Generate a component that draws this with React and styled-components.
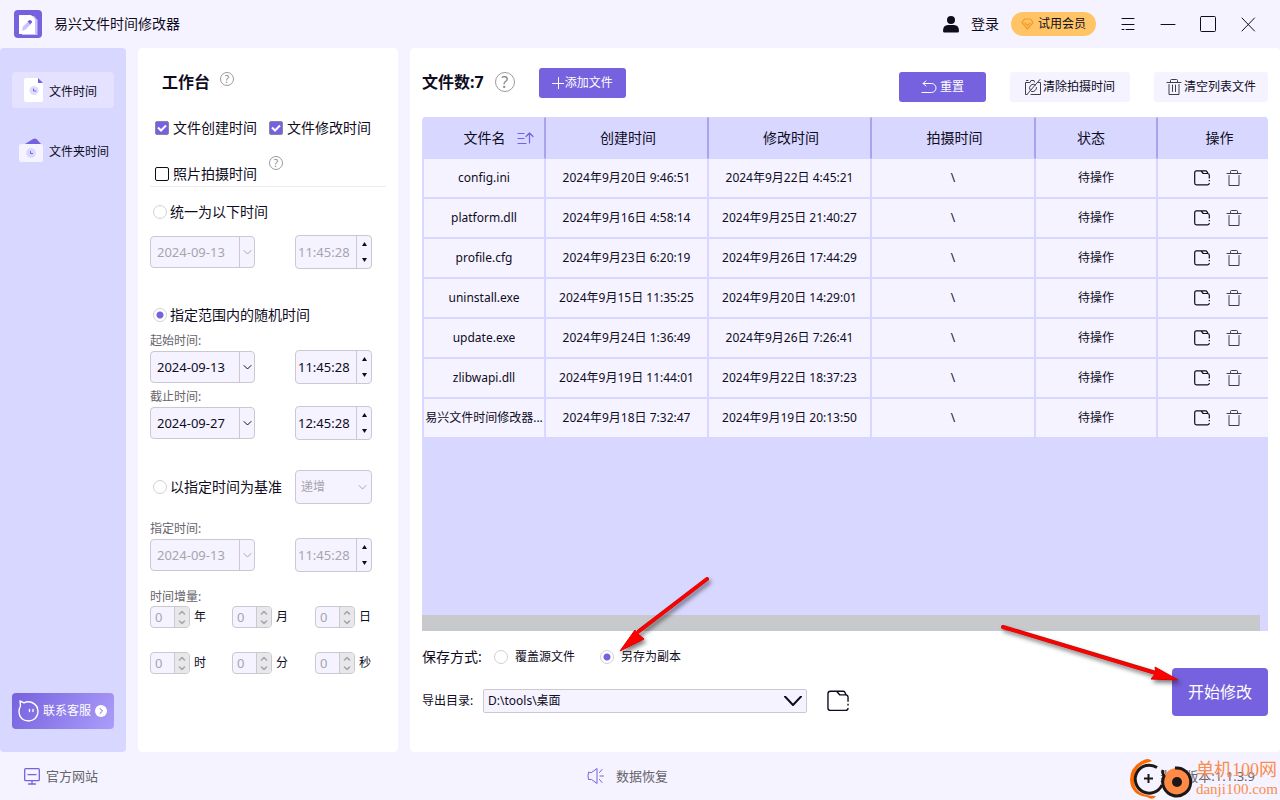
import React from "react";
import styled, { createGlobalStyle, css } from "styled-components";

const Global = createGlobalStyle`
  * { box-sizing: border-box; }
  body {
    margin: 0;
    background: #f5f3ff;
    color: #0f0c1e;
    font-family: "Noto Sans", "Noto Sans CJK SC", sans-serif;
    font-size: 12px;
    line-height: 18px;
  }
  button, input, select { font: inherit; color: inherit; margin: 0; }
  button { border: 0; background: none; padding: 0; cursor: pointer; }
  svg { display: block; flex: none; }
`;

const line = "#cbc8cf";
const purple = "#7661de";

/* ---------- icons ---------- */

const Svg = ({ w = 16, h = w, sw = 1, children, ...rest }) => (
  <svg width={w} height={h} viewBox={`0 0 ${w} ${h}`} fill="none" stroke="currentColor"
    strokeWidth={sw} strokeLinecap="round" strokeLinejoin="round" aria-hidden="true" {...rest}>
    {children}
  </svg>
);

const LogoIcon = () => (
  <Svg w={28} stroke="none">
    <rect width="28" height="28" rx="4" fill={purple} />
    <path d="M8 6h12l3.500 4v15H8z" fill="#c9c3fb" />
    <path d="M5 5.500Q5 5 5.500 5H17l4 4v14.500q0 .5-.5.500h-15Q5 24 5 23.500z" fill="#fff" />
    <path d="M8 21l1-4.500 5.500-5 2.500 2.500-5.500 5.500z" fill="#c9c3fb" />
    <path d="M13.500 11.500l2-1.600q2.600.1 2.600 2.600l-2 1.800z" fill={purple} />
  </Svg>
);
const FileClock = () => (
  <Svg w={24} stroke="none">
    <path d="M7 0h12v5h5v17q0 2-2 2H7q-2 0-2-2V2Q5 0 7 0z" fill="#fff" />
    <path d="M19 0v5h5z" fill={purple} />
    <circle cx="15" cy="12.500" r="4.500" fill="#dedcff" />
    <path d="M14.500 11v2h2.500" stroke={purple} />
  </Svg>
);
const FolderClock = () => (
  <Svg w={24} stroke="none">
    <path d="M6 6l8-5q2-1 3.500 0L22 6z" fill={purple} />
    <rect y="6" width="24" height="18" rx="2" fill="#f5f3ff" />
    <circle cx="12" cy="15" r="4.800" fill="#d8d7ff" />
    <path d="M11.500 13.500v2h2" stroke={purple} />
  </Svg>
);
const UserIcon = () => (
  <Svg w={16} h={17} stroke="none">
    <circle cx="8" cy="4" r="4" fill="#0f0c1e" />
    <path d="M0 15q0-6 5-6h6q5 0 5 6 0 1.500-1.500 1.500h-13Q0 16.500 0 15z" fill="#0f0c1e" />
  </Svg>
);
const DiamondIcon = () => (
  <Svg w={13} h={12} color="#f59a23" sw={1.2}>
    <path d="M3.500 1h6l2.500 3.500-5.500 6.500L1 4.500z" /><path d="M4 5l2.500 2.500L9 5" />
  </Svg>
);
const MenuIcon = () => (
  <Svg w={16} h={14}><path d="M2 1.500h12M2 7.500h12M2 12.500h2M6 12.500h8" /></Svg>
);
const MinIcon = () => <Svg w={16}><path d="M1 8.500h14" /></Svg>;
const MaxIcon = () => <Svg w={16}><rect x=".5" y=".5" width="15" height="15" rx="1" /></Svg>;
const CloseIcon = () => <Svg w={16}><path d="M2 2l12.500 13M14.500 2L2 15" /></Svg>;
const UndoIcon = () => (
  <Svg w={16} h={14}><path d="M5 1L2 3.500 5 6M2 3.500h8.500a4.500 4.500 0 0 1 0 9H1" /></Svg>
);
const PlusIcon = () => <Svg w={12}><path d="M0 6.500h12M6.500 0v12" /></Svg>;
const NoCamera = () => (
  <Svg w={16} h={16} color="#3f3c4b">
    <path d="M9.500 3L9 1.500H6L5 3.500H.5v12H2M6 15.500h9.500v-12h-2M1.500 1.500H3M15 .5L2 15.500" />
    <path d="M10.500 6A3.800 3.800 0 0 0 5 11M11.500 8.500A3.800 3.800 0 0 1 6.500 12.500" />
  </Svg>
);
const TrashIcon = ({ bars }) => (
  <Svg w={16} h={17} color="#3f3c4b">
    <path d="M1 3.500h14M4.500 3.500V1.500q0-1 1-1h5q1 0 1 1v2M3 5.500v10h10v-10" />
    {bars && <path d="M6.500 6v6.500M9.500 6v6.500" />}
  </Svg>
);
const FolderIcon = ({ size = 16, sw = 1.2 }) => (
  <svg width={size} height={size} viewBox="0 0 16 16" fill="none" stroke="currentColor"
    strokeWidth={sw} strokeLinejoin="round" aria-hidden="true">
    <path d="M15.300 8.500V5.300q0-1.800-1.800-1.800H9.200L7 .9H2.500Q.7.900.7 2.700v10.300q0 1.800 1.800 1.800h11q1.800 0 1.800-1.800M15.300 10v1.300M7 .9h4.800q.8 0 1.200.8l1 1.900" />
  </svg>
);
const SortIcon = () => (
  <Svg w={17} h={12} color={purple} sw={1.2}><path d="M1 1.500h6M1 6.500h6M1 11.500h8M12.500 11V1M9 4.500L12.500 1 16 4.500" /></Svg>
);
const Chevron = ({ w = 9, h = 5, sw = 1 }) => (
  <Svg w={w} h={h} sw={sw}><path d={`M1 .5L${w / 2} ${h - 1}L${w - 1} .5`} /></Svg>
);
const ChevronUp = () => <Svg w={8} h={5} sw={1.6}><path d="M1.500 4L4 1.500 6.500 4" /></Svg>;
const ChevronDown = () => <Svg w={8} h={5} sw={1.6}><path d="M1.500 1L4 3.500 6.500 1" /></Svg>;
const Tri = ({ down }) => (
  <Svg w={5} h={4} stroke="none"><path d={down ? "M0 0h5L2.500 4z" : "M0 4h5L2.500 0z"} fill="#0f0c1e" /></Svg>
);
const CatIcon = () => (
  <Svg w={21} h={22} sw={1.4}>
    <path d="M2.500 6L2 1l4 1.800Q10 1 14 2.500q6 2.500 6 9.500-1 8.500-9.500 9Q1.500 20.500 1 12 1 8.500 2.500 6z" />
    <path d="M11.500 9.500v2M15 9.500v2" />
  </Svg>
);
const GoIcon = () => (
  <Svg w={12} stroke="none">
    <circle cx="6" cy="6" r="6" fill="#fff" /><path d="M5 3.500L7.500 6 5 8.500" stroke={purple} />
  </Svg>
);
const MonitorIcon = () => (
  <Svg w={16} h={17} color={purple} sw={1.3}>
    <rect x=".7" y=".7" width="14.600" height="12" rx="1" /><path d="M4 6.700h8M8 13v3M4.500 16h7" />
  </Svg>
);
const SpeakerIcon = () => (
  <Svg w={17} h={16} color={purple}>
    <path d="M1.500 4.500Q.5 8 1.500 11.500h3l5.500 4V.5l-5.500 4zM12.500 4.500l2.500-3M13 8h3.500M12.500 11.500l2.500 3" />
  </Svg>
);

/* ---------- shell ---------- */

const Page = styled.div`
  position: relative;
  min-height: 100vh;
  display: flex;
  flex-direction: column;
`;
const Header = styled.header`
  height: 48px;
  padding: 0 24px 0 14px;
  display: flex;
  align-items: center;
  justify-content: space-between;
  font-size: 14px;
`;
const Group = styled.div`
  display: flex;
  align-items: center;
  gap: ${(p) => p.$gap || 0}px;
`;
const AppName = styled.h1`
  margin: 0;
  font-size: 14px;
  font-weight: 400;
`;
const IconButton = styled.button`
  display: flex;
  align-items: center;
  gap: 12px;
`;
const Pill = styled.button`
  height: 24px;
  width: 85px;
  margin-left: -12px;
  border-radius: 12px;
  background: #ffc466;
  font-size: 12px;
  display: flex;
  align-items: center;
  justify-content: center;
  gap: 4px;
`;
const Body = styled.div`
  flex: 1;
  display: flex;
  gap: 12px;
`;
const Sidebar = styled.nav`
  width: 126px;
  flex: none;
  padding: 24px 12px 23px;
  border-radius: 4px;
  background: #d8d7ff;
  display: flex;
  flex-direction: column;
  gap: 24px;
`;
const NavItem = styled.button`
  height: 36px;
  padding-left: 7px;
  border-radius: 4px;
  background: ${(p) => (p.$active ? "#e4e2ff" : "none")};
  display: flex;
  align-items: center;
  gap: 6px;
  white-space: nowrap;
  line-height: 18px;
  span { padding-top: 4px; }
`;
const Contact = styled.button`
  height: 36px;
  margin-top: auto;
  border-radius: 4px;
  background: linear-gradient(120deg, #7661de, #ab9dfa);
  color: #fff;
  display: flex;
  align-items: center;
  padding-left: 6px;
  gap: 4px;
  white-space: nowrap;
`;
const Footer = styled.footer`
  height: 48px;
  padding: 0 25px 0 24px;
  display: grid;
  grid-template-columns: 1fr auto 1fr;
  align-items: center;
  color: #66646d;
  font-size: 13px;
`;
const FootLink = styled.a`
  display: flex;
  align-items: center;
  gap: ${(p) => p.$gap}px;
  padding-right: 24px;
  color: inherit;
  text-decoration: none;
`;
const Version = styled.span`
  text-align: right;
`;

/* ---------- settings panel ---------- */

const Panel = styled.section`
  width: 260px;
  flex: none;
  padding: 20px 12px;
  border-radius: 4px;
  background: #fff;
`;
const Title = styled.h2`
  margin: 0;
  font-size: 16px;
  line-height: 28px;
  font-weight: 700;
`;
const PanelHead = styled.div`
  display: flex;
  gap: 10px;
  padding-left: 12px;
`;
const Help = styled.button`
  width: ${(p) => p.$size}px;
  height: ${(p) => p.$size}px;
  border: 1px solid #9c9aa0;
  border-radius: 50%;
  color: #88868c;
  font-size: ${(p) => p.$size - 4}px;
  line-height: ${(p) => p.$size - 2}px;
  text-align: center;
`;
const TitleHelp = styled(Help)`
  margin-top: 4px;
`;
const RaisedHelp = styled(Help)`
  align-self: flex-start;
  margin-top: -5px;
`;
const Row = styled.div`
  display: flex;
  align-items: center;
  gap: ${(p) => p.$gap || 0}px;
  height: 24px;
  margin-top: ${(p) => p.$top}px;
  padding-left: ${(p) => p.$inset || 0}px;
  font-size: 14px;
`;
const PhotoRow = styled(Row)`
  height: 26px;
  border-bottom: 1px solid #ececee;
`;
const Label = styled.label`
  display: flex;
  align-items: center;
  gap: ${(p) => p.$gap || 4}px;
  white-space: nowrap;
`;
const Check = styled.input.attrs({ type: "checkbox" })`
  appearance: none;
  width: 14px;
  height: 14px;
  border: 1px solid #0f0c1e;
  border-radius: 2px;
  &:checked {
    border-color: #8a86a0;
    background: ${purple} url("data:image/svg+xml,%3Csvg xmlns='http://www.w3.org/2000/svg' viewBox='0 0 12 12'%3E%3Cpath d='M2 5.500l3 3L10 3.500' fill='none' stroke='white' stroke-width='2'/%3E%3C/svg%3E") center / 12px no-repeat;
  }
`;
const Radio = styled.input.attrs({ type: "radio" })`
  appearance: none;
  width: 14px;
  height: 14px;
  border: 1px solid #d2d0d4;
  border-radius: 50%;
  background: #fff;
  &:checked {
    background: radial-gradient(circle, ${purple} 3px, #fff 4px);
  }
`;
const Caption = styled.div`
  height: 18px;
  margin-top: ${(p) => p.$top}px;
  color: #66646d;
`;
const Fields = styled.div`
  display: flex;
  align-items: center;
  gap: 40px;
  height: 34px;
  margin-top: ${(p) => p.$top || 0}px;
`;
const Box = styled.div`
  display: flex;
  width: ${(p) => p.$w}px;
  height: ${(p) => p.$h}px;
  border: 1px solid ${line};
  border-radius: 4px;
  background: #f5f3ff;
  overflow: hidden;
  color: ${(p) => (p.$off ? "#a8a5ae" : "#0f0c1e")};
`;
const Entry = styled.input`
  flex: 1;
  min-width: 0;
  border: 0;
  padding: 0 0 0 ${(p) => p.$pad}px;
  background: none;
  font-size: 13px;
  color: inherit;
`;
const Side = styled.button`
  width: 15px;
  border-left: 1px solid ${line};
  color: inherit;
  display: flex;
  align-items: center;
  justify-content: center;
`;
const Spin = styled.div`
  width: 15px;
  flex: none;
  border-left: 1px solid ${line};
  background: ${(p) => (p.$gray ? "#e8e7e9" : "none")};
  display: flex;
  flex-direction: column;
  button {
    flex: 1;
    display: flex;
    align-items: center;
    justify-content: center;
  }
`;
const SelectWrap = styled.div`
  display: grid;
  align-items: center;
  width: ${(p) => p.$w};
  select {
    grid-area: 1 / 1;
    appearance: none;
    width: 100%;
    height: ${(p) => p.$h}px;
    padding: 0 ${(p) => p.$pad}px;
    border: 1px solid ${line};
    border-radius: ${(p) => p.$r}px;
    background: #f5f3ff;
    color: inherit;
    font-size: 12px;
    opacity: 1;
  }
  svg {
    grid-area: 1 / 1;
    justify-self: end;
    margin-right: 5px;
    pointer-events: none;
  }
  ${(p) => p.$off && css`color: #a8a5ae;`}
`;
const BaseRow = styled(Row)`
  height: 34px;
  justify-content: space-between;
  padding-right: 14px;
`;
const Increments = styled.div`
  display: grid;
  grid-template-columns: 82px 83px auto;
  row-gap: 24px;
`;

const DateBox = ({ value, off, label }) => (
  <Box $w={105} $h={32} $off={off}>
    <Entry $pad={6} defaultValue={value} disabled={off} aria-label={label} />
    <Side disabled={off} aria-label="展开日历"><Chevron /></Side>
  </Box>
);
const TimeBox = ({ value, off, label }) => (
  <Box $w={77} $h={34} $off={off}>
    <Entry $pad={2} defaultValue={value} disabled={off} aria-label={label} />
    <Spin>
      <button aria-label="增加"><Tri /></button>
      <button aria-label="减少"><Tri down /></button>
    </Spin>
  </Box>
);
const Increment = ({ unit }) => (
  <Label>
    <Box $w={40} $h={22} $off>
      <Entry $pad={4} defaultValue="0" disabled />
      <Spin $gray>
        <button disabled aria-label="增加"><ChevronUp /></button>
        <button disabled aria-label="减少"><ChevronDown /></button>
      </Spin>
    </Box>
    {unit}
  </Label>
);

/* ---------- file list ---------- */

const Content = styled.main`
  flex: 1;
  min-width: 0;
  padding: 20px 12px 36px;
  border-radius: 4px;
  background: #fff;
  display: flex;
  flex-direction: column;
`;
const Toolbar = styled.div`
  display: flex;
  justify-content: space-between;
  height: 34px;
`;
const ToolGroup = styled.div`
  display: flex;
  align-items: ${(p) => p.$align};
  gap: 24px;
`;
const Button = styled.button`
  height: 30px;
  width: ${(p) => p.$w}px;
  border-radius: 3px;
  background: ${(p) => (p.$primary ? purple : "#f5f3ff")};
  color: ${(p) => (p.$primary ? "#fff" : "#0f0c1e")};
  display: flex;
  align-items: center;
  justify-content: center;
  gap: ${(p) => p.$gap || 2}px;
  white-space: nowrap;
`;
const ListArea = styled.div`
  flex: 1;
  margin-top: 15px;
  border-radius: 4px 4px 0 0;
  background: #d8d7ff;
  overflow: hidden;
  display: flex;
  flex-direction: column;
  justify-content: space-between;
`;
const Table = styled.table`
  width: calc(100% + 12px);
  table-layout: fixed;
  border-collapse: separate;
  border-spacing: 0;
  text-align: center;
`;
const Th = styled.th`
  height: 42px;
  padding: 0 ${(p) => p.$shift || 0}px 0 3px;
  border: solid #d8d7ff;
  border-width: 1px 0;
  border-right: 2px solid #a8a3ee;
  font-size: 14px;
  font-weight: 400;
`;
const HeadName = styled.div`
  display: grid;
  grid-template-columns: 1fr auto 1fr;
  align-items: center;
  svg { margin-left: 11px; }
`;
const Td = styled.td`
  height: 40px;
  padding: 0;
  border: solid #d8d7ff;
  border-width: 0 2px 2px 0;
  background: #f5f3ff;
  overflow: hidden;
  white-space: nowrap;
  &:first-child { border-left-width: 2px; }
`;
const Actions = styled.div`
  display: flex;
  justify-content: center;
  gap: 16px;
`;
const Scrollbar = styled.div`
  height: 16px;
  margin-right: 8px;
  background: #c8c9cc;
`;
const Bottom = styled.div`
  display: flex;
  align-items: flex-end;
  justify-content: space-between;
  padding-top: 16px;
`;
const Option = styled.div`
  display: flex;
  align-items: center;
  height: ${(p) => p.$h}px;
  margin-bottom: ${(p) => p.$gapAfter || 0}px;
`;
const OptionName = styled.span`
  width: ${(p) => p.$w}px;
  font-size: ${(p) => p.$size || 12}px;
`;
const Choice = styled(Label)`
  margin-right: 25px;
  gap: 7px;
`;
const Start = styled.button`
  width: 96px;
  height: 48px;
  border-radius: 4px;
  background: ${purple};
  color: #fff;
  font-size: 16px;
`;

/* ---------- layers above the page ---------- */

const Arrow = styled.svg`
  position: absolute;
  right: ${(p) => p.$right}px;
  bottom: ${(p) => p.$bottom}px;
  pointer-events: none;
  overflow: visible;
  filter: drop-shadow(2px 3px 2px rgba(0, 0, 0, 0.5));
`;
const Mark = styled.div`
  position: absolute;
  right: 2px;
  bottom: 0;
  display: flex;
  align-items: center;
  gap: 2px;
  color: #f98d4f;
  pointer-events: none;
`;
const MarkText = styled.div`
  font-family: "Liberation Serif", "Noto Sans CJK SC", serif;
  font-size: 18px;
  line-height: 20px;
  small {
    display: block;
    font-size: 15px;
    line-height: 18px;
  }
`;

const files = [
  ["config.ini", "2024年9月20日 9:46:51", "2024年9月22日 4:45:21"],
  ["platform.dll", "2024年9月16日 4:58:14", "2024年9月25日 21:40:27"],
  ["profile.cfg", "2024年9月23日 6:20:19", "2024年9月26日 17:44:29"],
  ["uninstall.exe", "2024年9月15日 11:35:25", "2024年9月20日 14:29:01"],
  ["update.exe", "2024年9月24日 1:36:49", "2024年9月26日 7:26:41"],
  ["zlibwapi.dll", "2024年9月19日 11:44:01", "2024年9月22日 18:37:23"],
  ["易兴文件时间修改器...", "2024年9月18日 7:32:47", "2024年9月19日 20:13:50"],
];

export default function App() {
  return (
    <Page>
      <Global />
      <Header>
        <Group $gap={12}><LogoIcon /><AppName>易兴文件时间修改器</AppName></Group>
        <Group $gap={24}>
          <IconButton><UserIcon />登录</IconButton>
          <Pill><DiamondIcon />试用会员</Pill>
          <IconButton aria-label="菜单"><MenuIcon /></IconButton>
          <IconButton aria-label="最小化"><MinIcon /></IconButton>
          <IconButton aria-label="最大化"><MaxIcon /></IconButton>
          <IconButton aria-label="关闭"><CloseIcon /></IconButton>
        </Group>
      </Header>

      <Body>
        <Sidebar>
          <NavItem $active><FileClock /><span>文件时间</span></NavItem>
          <NavItem><FolderClock /><span>文件夹时间</span></NavItem>
          <Contact><CatIcon />联系客服<GoIcon /></Contact>
        </Sidebar>

        <Panel>
          <PanelHead><Title>工作台</Title><TitleHelp $size={14}>?</TitleHelp></PanelHead>
          <Row $top={20} $gap={12} $inset={5}>
            <Label><Check defaultChecked />文件创建时间</Label>
            <Label><Check defaultChecked />文件修改时间</Label>
          </Row>
          <PhotoRow $top={21} $gap={12} $inset={5}>
            <Label><Check />照片拍摄时间</Label><RaisedHelp $size={14}>?</RaisedHelp>
          </PhotoRow>
          <Row $top={13} $inset={3}><Label $gap={3}><Radio name="mode" />统一为以下时间</Label></Row>
          <Fields $top={11}>
            <DateBox value="2024-09-13" off label="统一日期" />
            <TimeBox value="11:45:28" off label="统一时间" />
          </Fields>
          <Row $top={34} $inset={3}><Label $gap={3}><Radio name="mode" defaultChecked />指定范围内的随机时间</Label></Row>
          <Caption $top={5}>起始时间:</Caption>
          <Fields>
            <DateBox value="2024-09-13" label="起始日期" />
            <TimeBox value="11:45:28" label="起始时间" />
          </Fields>
          <Caption $top={4}>截止时间:</Caption>
          <Fields>
            <DateBox value="2024-09-27" label="截止日期" />
            <TimeBox value="12:45:28" label="截止时间" />
          </Fields>
          <BaseRow $top={30} $inset={3}>
            <Label $gap={3}><Radio name="mode" />以指定时间为基准</Label>
            <SelectWrap $w="77px" $h={34} $pad={5} $r={4} $off>
              <select disabled aria-label="增减方式"><option>递增</option></select>
              <Chevron />
            </SelectWrap>
          </BaseRow>
          <Caption $top={16}>指定时间:</Caption>
          <Fields>
            <DateBox value="2024-09-13" off label="指定日期" />
            <TimeBox value="11:45:28" off label="指定时间" />
          </Fields>
          <Caption $top={16}>时间增量:</Caption>
          <Increments>
            {["年", "月", "日", "时", "分", "秒"].map((u) => <Increment key={u} unit={u} />)}
          </Increments>
        </Panel>

        <Content>
          <Toolbar>
            <ToolGroup $align="flex-start">
              <Group $gap={11}><Title>文件数:7</Title><Help $size={20}>?</Help></Group>
              <Button $primary $w={87} $gap={1}><PlusIcon />添加文件</Button>
            </ToolGroup>
            <ToolGroup $align="flex-end">
              <Button $primary $w={87} $gap={3}><UndoIcon />重置</Button>
              <Button $w={120}><NoCamera />清除拍摄时间</Button>
              <Button $w={114}><TrashIcon bars />清空列表文件</Button>
            </ToolGroup>
          </Toolbar>

          <ListArea>
            <Table>
              <colgroup>
                {[124, 163, 163, 164, 122, 122].map((w, i) => <col key={i} width={w} />)}
              </colgroup>
              <thead>
                <tr>
                  <Th><HeadName><span />文件名<SortIcon /></HeadName></Th>
                  <Th>创建时间</Th>
                  <Th>修改时间</Th>
                  <Th>拍摄时间</Th>
                  <Th $shift={13}>状态</Th>
                  <Th>操作</Th>
                </tr>
              </thead>
              <tbody>
                {files.map(([name, created, modified]) => (
                  <tr key={name}>
                    <Td>{name}</Td>
                    <Td>{created}</Td>
                    <Td>{modified}</Td>
                    <Td>\</Td>
                    <Td>待操作</Td>
                    <Td>
                      <Actions>
                        <IconButton aria-label="打开文件夹"><FolderIcon /></IconButton>
                        <IconButton aria-label="删除"><TrashIcon /></IconButton>
                      </Actions>
                    </Td>
                  </tr>
                ))}
              </tbody>
            </Table>
            <Scrollbar />
          </ListArea>

          <Bottom>
            <div>
              <Option $h={20} $gapAfter={19}>
                <OptionName $w={72} $size={14}>保存方式:</OptionName>
                <Choice><Radio name="save" />覆盖源文件</Choice>
                <Choice><Radio name="save" defaultChecked />另存为副本</Choice>
              </Option>
              <Option $h={30}>
                <OptionName as="label" htmlFor="target" $w={61}>导出目录:</OptionName>
                <Group $gap={20}>
                  <SelectWrap $w="324px" $h={24} $pad={4} $r={2}>
                    <select id="target"><option>D:\tools\桌面</option></select>
                    <Chevron w={18} h={10} sw={2} />
                  </SelectWrap>
                  <IconButton aria-label="选择目录"><FolderIcon size={22} sw={1} /></IconButton>
                </Group>
              </Option>
            </div>
            <Start>开始修改</Start>
          </Bottom>
        </Content>
      </Body>

      <Footer>
        <FootLink href="#site" $gap={6}><MonitorIcon />官方网站</FootLink>
        <FootLink href="#recover" $gap={12}><SpeakerIcon />数据恢复</FootLink>
        <Version>当前版本:1.1.3.9</Version>
      </Footer>

      <Arrow $right={570} $bottom={147} width="90" height="76" viewBox="0 0 90 76" aria-hidden="true">
        <path d="M87 2L19 54" stroke="#b3160f" strokeWidth="4" strokeLinecap="round" />
        <path d="M0 74L15 53l3 4 6 5z" fill="#f00" stroke="#d00" strokeWidth="1" />
        <path d="M87 2L17 56" stroke="#f00" strokeWidth="3" strokeLinecap="round" />
      </Arrow>
      <Arrow $right={100} $bottom={116} width="180" height="60" viewBox="0 0 180 60" aria-hidden="true">
        <path d="M3 3L156 49" stroke="#b3160f" strokeWidth="4" strokeLinecap="round" />
        <path d="M178 56L155 43l1 6-5 6z" fill="#f00" stroke="#d00" strokeWidth="1" />
        <path d="M3 3L158 50" stroke="#f00" strokeWidth="3" strokeLinecap="round" />
      </Arrow>
      <Mark>
        <svg width="64" height="42" viewBox="0 0 64 42" fill="none" aria-hidden="true">
          <path d="M22 3Q18-1 12 3 0 9 0 22q1 15 17 17 6 4 9-1Q4 38 4 22 5 8 16 5q4-1 6-2z" fill="#ff6a00" />
          <path d="M27 9.500A14 14 0 1 0 32 27" stroke="#1d1718" strokeWidth="3" />
          <path d="M14 20.500h9M18.500 16v9" stroke="#1d1718" strokeWidth="2" />
          <circle cx="47" cy="24" r="14" fill="#ff8a45" />
          <path d="M45 10a14 14 0 1 1-11 8q-2-3-1-6" stroke="#1d1718" strokeWidth="3" />
          <circle cx="47" cy="24" r="5" fill="#1d1718" />
        </svg>
        <MarkText>单机100网<small>danji100.com</small></MarkText>
      </Mark>
    </Page>
  );
}
